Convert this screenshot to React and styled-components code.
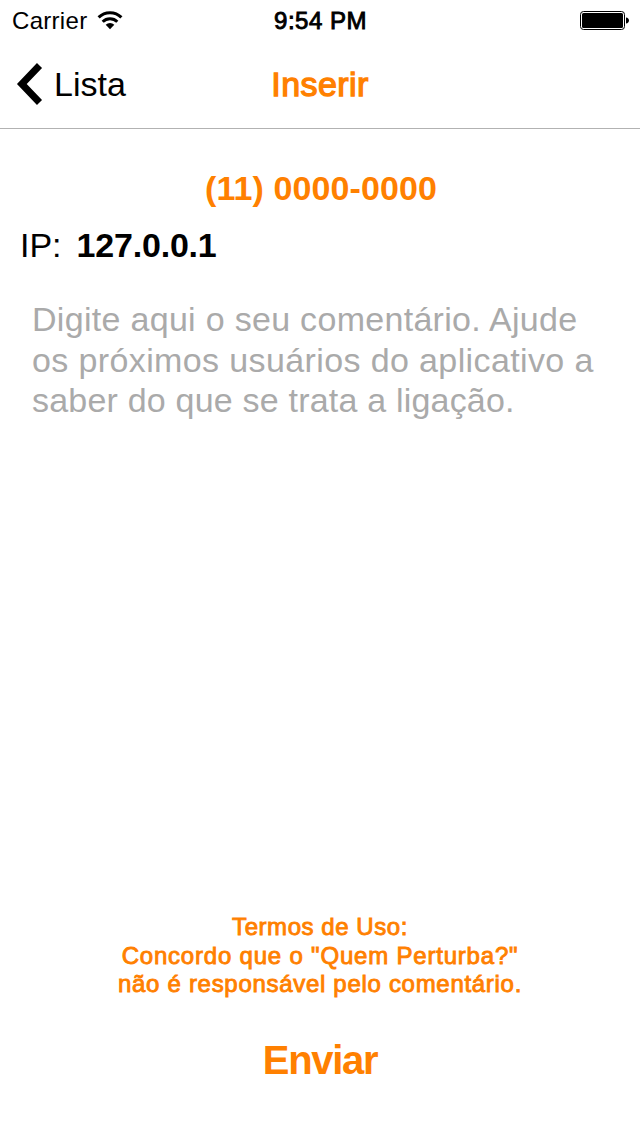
import React from 'react'
import styled, { createGlobalStyle } from 'styled-components'

const orange = '#ff8000'

const GlobalStyle = createGlobalStyle`
  body {
    margin: 0;
    background: #fff;
    font-family: 'Liberation Sans', Arial, sans-serif;
    color: #000;
  }
`

const Screen = styled.div`
  display: flex;
  flex-direction: column;
  box-sizing: border-box;
  width: 640px;
  height: 1136px;
  overflow: hidden;
`

const Text = styled.span`
  display: block;
  white-space: pre;
  font-weight: ${p => (p.$bold ? 'bold' : 'normal')};
  letter-spacing: ${p => p.$spacing || 0}px;
  -webkit-text-stroke: ${p => p.$stroke || 0}px currentColor;
`

const StatusBar = styled.div`
  display: grid;
  grid-template-columns: 1fr auto 1fr;
  align-items: center;
  height: 42px;
  padding: 0 11px 0 12px;
  font-size: 24px;
  line-height: 42px;
`

const Carrier = styled.div`
  display: flex;
  align-items: center;
  gap: 10px;
`

const Battery = styled.svg`
  justify-self: end;
`

const NavBar = styled.div`
  display: grid;
  grid-template-columns: 1fr auto 1fr;
  align-items: center;
  height: 84px;
  padding: 0 16px 2px;
  border-bottom: 1px solid #b2b2b2;
  font-size: 34px;
  line-height: 84px;
`

const BackButton = styled.div`
  display: flex;
  align-items: center;
  gap: 11px;
`

const Title = styled(Text)`
  color: ${orange};
`

const Phone = styled.div`
  display: flex;
  justify-content: center;
  padding: 31px 0 0 2px;
  font-size: 34px;
  line-height: 57px;
  color: ${orange};
`

const Address = styled.div`
  display: flex;
  gap: 15px;
  padding-left: 20px;
  font-size: 34px;
  line-height: 57px;
`

const Comment = styled.div`
  flex: 1;
  padding: 25px 0 0 32px;
  font-size: 34px;
  line-height: 40.6px;
  color: #aaa;
`

const Terms = styled.div`
  display: flex;
  flex-direction: column;
  align-items: center;
  font-size: 24px;
  line-height: 28.6px;
  color: ${orange};
`

const SendButton = styled.div`
  display: flex;
  justify-content: center;
  padding: 31px 0 46px;
  font-size: 40px;
  line-height: 60px;
  color: ${orange};
`

const commentLines = [
  { text: 'Digite aqui o seu comentário. Ajude', spacing: 0.3 },
  { text: 'os próximos usuários do aplicativo a', spacing: 0.38 },
  { text: 'saber do que se trata a ligação.', spacing: 0.2 }
]

const termsLines = [
  { text: 'Termos de Uso:', spacing: 0.55 },
  { text: 'Concordo que o "Quem Perturba?"', spacing: 0.8 },
  { text: 'não é responsável pelo comentário.', spacing: 0.7 }
]

const WifiIcon = () => (
  <svg width='26' height='20' viewBox='0 0 26 20'>
    <g fill='none' stroke='#000' strokeWidth='3'>
      <path d='M1.6 6.4a16.1 16.1 0 0 1 22.8 0' />
      <path d='M5.7 10.7a10.3 10.3 0 0 1 14.6 0' />
    </g>
    <path d='M8.7 13.7a6 6 0 0 1 8.600 0L13 18.200z' />
  </svg>
)

const BatteryIcon = () => (
  <Battery width='49' height='20' viewBox='0 0 49 20'>
    <rect x='0.5' y='0.5' width='44' height='18' rx='3' fill='none' stroke='#000' />
    <rect x='2' y='2' width='41' height='15' rx='1.5' />
    <path d='M46 6.5c1.900.3 3 1.400 3 3s-1.100 2.700-3 3z' />
  </Battery>
)

const BackIcon = () => (
  <svg width='27' height='44' viewBox='0 0 27 44'>
    <path d='M23.5 3.5L5.800 22L23.500 40.500' fill='none' stroke='#000' strokeWidth='7' />
  </svg>
)

const App = () => (
  <>
    <GlobalStyle />
    <Screen>
      <StatusBar>
        <Carrier>
          <Text $spacing={0.3}>Carrier</Text>
          <WifiIcon />
        </Carrier>
        <Text $spacing={0.5} $stroke={0.9}>9:54 PM</Text>
        <BatteryIcon />
      </StatusBar>
      <NavBar>
        <BackButton>
          <BackIcon />
          <Text>Lista</Text>
        </BackButton>
        <Title $spacing={0.4} $stroke={1.3}>Inserir</Title>
      </NavBar>
      <Phone>
        <Text $spacing={0.1} $bold>(11) 0000-0000</Text>
      </Phone>
      <Address>
        <Text>IP:</Text>
        <Text $spacing={-0.2} $bold>127.0.0.1</Text>
      </Address>
      <Comment>
        {commentLines.map(line => (
          <Text key={line.text} $spacing={line.spacing}>{line.text}</Text>
        ))}
      </Comment>
      <Terms>
        {termsLines.map(line => (
          <Text key={line.text} $spacing={line.spacing} $stroke={0.9}>{line.text}</Text>
        ))}
      </Terms>
      <SendButton>
        <Text $spacing={-1.3} $bold>Enviar</Text>
      </SendButton>
    </Screen>
  </>
)

export default App
